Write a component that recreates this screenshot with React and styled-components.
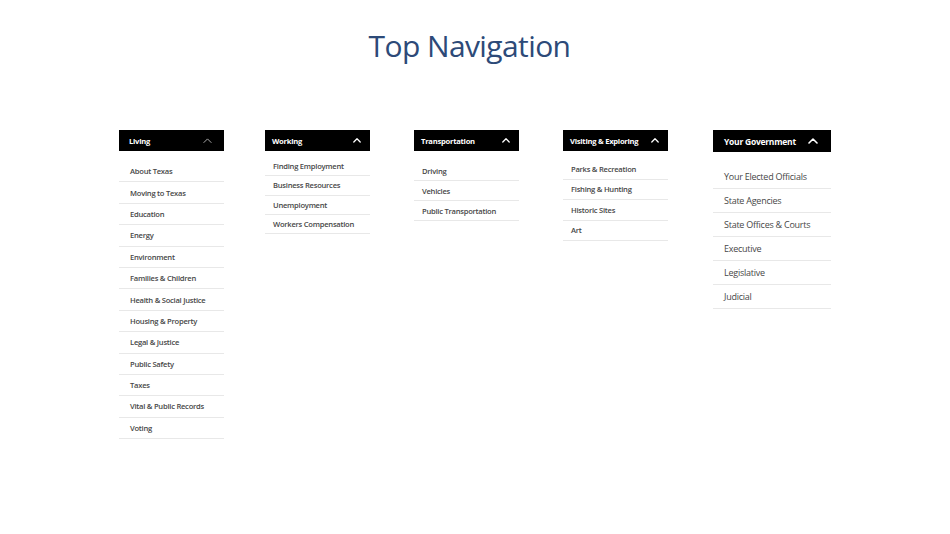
import React from "react";
import styled, { createGlobalStyle } from "styled-components";

const Global = createGlobalStyle`
  html, body { margin: 0; padding: 0; background: #ffffff; }
  body { font-family: "Open Sans", "Noto Sans", sans-serif; }
`;

const Page = styled.div`
  width: 950px;
  min-height: 534px;
  background: #fff;
`;

const Title = styled.h1`
  margin: 0;
  padding-top: 25px;
  padding-right: 11px;
  text-align: center;
  font-family: "Open Sans", "Noto Sans", sans-serif;
  font-weight: 400;
  font-size: 30px;
  line-height: 42px;
  color: #2d4a78;
  letter-spacing: -0.6px;
`;

const Columns = styled.div`
  display: flex;
  justify-content: center;
  align-items: flex-start;
  margin-top: 63px;
`;

const Menu = styled.nav`
  width: ${(p) => p.$width}px;
  margin-left: ${(p) => p.$offset}px;
  flex: none;
`;

const Header = styled.div`
  display: flex;
  align-items: center;
  justify-content: space-between;
  height: ${(p) => p.$height}px;
  background: #000;
  color: #fff;
  padding: 0 ${(p) => p.$padRight}px 0 ${(p) => p.$padLeft}px;
  font-size: ${(p) => p.$size}px;
  font-weight: 700;
  letter-spacing: -0.25px;
  box-sizing: border-box;
  white-space: nowrap;
`;

const Chevron = ({ light, w }) => (
  <svg width={w} height={w * 0.6} viewBox="0 0 10 6" fill="none">
    <path
      d="M1 5 L5 1 L9 5"
      stroke={light ? "#bbbbbb" : "#ffffff"}
      strokeWidth={light ? 1 : 1.6}
      strokeLinecap="round"
      strokeLinejoin="round"
    />
  </svg>
);

const List = styled.ul`
  list-style: none;
  margin: ${(p) => p.$gap}px 0 0;
  padding: 0;
`;

const Item = styled.li`
  height: ${(p) => p.$height}px;
  display: flex;
  align-items: center;
  padding-left: ${(p) => p.$pad}px;
  border-bottom: 1px solid #e8e8e8;
  box-sizing: border-box;
  font-size: ${(p) => p.$size}px;
  font-weight: ${(p) => p.$weight};
  letter-spacing: -0.25px;
  color: #474747;
  white-space: nowrap;
`;

const menus = [
  {
    title: "Living",
    width: 105,
    offset: 0,
    headerH: 21,
    headerSize: 7.6,
    padLeft: 10,
    padRight: 12,
    light: true,
    chevW: 9,
    gap: 10,
    rowH: 21.4,
    size: 7.6,
    weight: 600,
    pad: 11,
    items: [
      "About Texas",
      "Moving to Texas",
      "Education",
      "Energy",
      "Environment",
      "Families & Children",
      "Health & Social Justice",
      "Housing & Property",
      "Legal & Justice",
      "Public Safety",
      "Taxes",
      "Vital & Public Records",
      "Voting",
    ],
  },
  {
    title: "Working",
    width: 105,
    offset: 41,
    headerH: 21,
    headerSize: 7.6,
    padLeft: 7,
    padRight: 9,
    chevW: 8,
    gap: 6,
    rowH: 19.3,
    size: 7.6,
    weight: 600,
    pad: 8,
    items: ["Finding Employment", "Business Resources", "Unemployment", "Workers Compensation"],
  },
  {
    title: "Transportation",
    width: 105,
    offset: 44,
    headerH: 21,
    headerSize: 7.6,
    padLeft: 7,
    padRight: 9,
    chevW: 8,
    gap: 10,
    rowH: 20,
    size: 7.6,
    weight: 600,
    pad: 8,
    items: ["Driving", "Vehicles", "Public Transportation"],
  },
  {
    title: "Visiting & Exploring",
    width: 105,
    offset: 44,
    headerH: 21,
    headerSize: 7.6,
    padLeft: 7,
    padRight: 9,
    chevW: 8,
    gap: 8,
    rowH: 20.5,
    size: 7.6,
    weight: 600,
    pad: 8,
    items: ["Parks & Recreation", "Fishing & Hunting", "Historic Sites", "Art"],
  },
  {
    title: "Your Government",
    width: 118,
    offset: 45,
    headerH: 22,
    headerSize: 8.5,
    padLeft: 11,
    padRight: 13,
    chevW: 10,
    gap: 13,
    rowH: 24,
    size: 9,
    weight: 500,
    pad: 11,
    items: [
      "Your Elected Officials",
      "State Agencies",
      "State Offices & Courts",
      "Executive",
      "Legislative",
      "Judicial",
    ],
  },
];

export default function App() {
  return (
    <Page>
      <Global />
      <Title>Top Navigation</Title>
      <Columns>
        {menus.map((m) => (
          <Menu key={m.title} $width={m.width} $offset={m.offset}>
            <Header
              $height={m.headerH}
              $size={m.headerSize}
              $padLeft={m.padLeft}
              $padRight={m.padRight}
            >
              <span>{m.title}</span>
              <Chevron light={m.light} w={m.chevW} />
            </Header>
            <List $gap={m.gap}>
              {m.items.map((it) => (
                <Item key={it} $height={m.rowH} $size={m.size} $weight={m.weight} $pad={m.pad}>
                  {it}
                </Item>
              ))}
            </List>
          </Menu>
        ))}
      </Columns>
    </Page>
  );
}
